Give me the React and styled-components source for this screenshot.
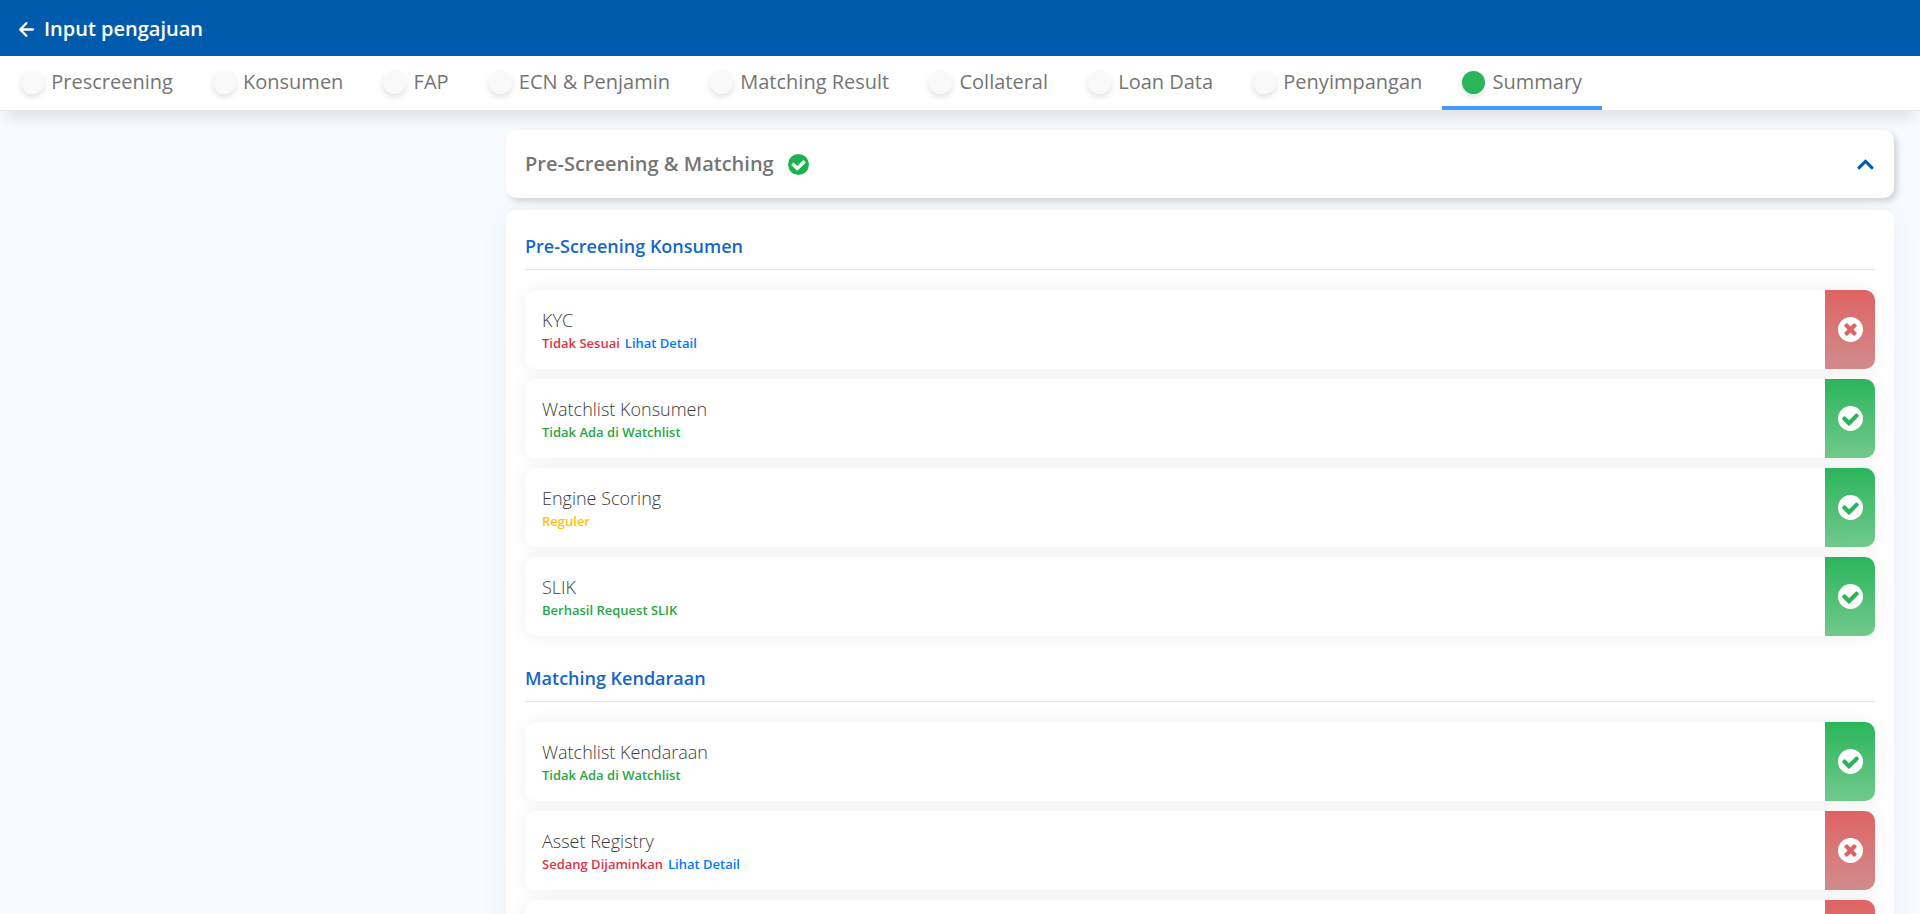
import React from "react";
import styled, { createGlobalStyle } from "styled-components";
import { FaChevronUp } from "react-icons/fa";

const Global = createGlobalStyle`
  * { box-sizing: border-box; }
  body {
    margin: 0;
    background: #f7fbff;
    font-family: "Open Sans", "Noto Sans", sans-serif;
    color: #757575;
  }
  h1, h2, h3, h4, p, ul { margin: 0; padding: 0; }
`;

const Page = styled.div`
  display: flex;
  flex-direction: column;
  height: 100vh;
  overflow: hidden;
`;

const TopBar = styled.header`
  display: flex;
  align-items: center;
  gap: 9px;
  flex: none;
  height: 56px;
  padding: 2px 18px 0;
  background: #005bac;
  color: #fff;
`;

const BackButton = styled.button`
  display: flex;
  padding: 0;
  border: 0;
  background: none;
  color: inherit;
  cursor: pointer;
`;

const PageTitle = styled.h1`
  font-size: 20px;
  line-height: 28px;
  font-weight: 600;
`;

const TabBar = styled.nav`
  display: flex;
  flex: none;
  height: 55px;
  padding-left: 1px;
  background: #fff;
  border-bottom: 1px solid #e6e6e6;
  box-shadow: 0 12px 16px -6px rgba(0, 0, 0, 0.11);
  z-index: 1;
`;

const Tab = styled.a`
  padding: 0 20px;
  border-bottom: 4px solid ${(p) => (p.$active ? "#4299ff" : "transparent")};
  color: #757575;
  font-size: 20px;
  line-height: 52px;
  text-decoration: none;
  white-space: nowrap;
`;

const Dot = styled.span`
  display: inline-block;
  width: 23px;
  height: 23px;
  margin: 0 2px 2px 0;
  border-radius: 50%;
  vertical-align: middle;
  background: ${(p) => (p.$active ? "#2bb55b" : "#f9f9f9")};
  box-shadow: 0 3px 6px rgba(0, 0, 0, 0.12);
`;

const Scroller = styled.div`
  flex: 1;
  min-height: 0;
  overflow-y: auto;
  scrollbar-width: none;
`;

const Columns = styled.div`
  display: grid;
  grid-template-columns: 1fr 3fr;
`;

const Main = styled.main`
  grid-column: 2;
  display: flex;
  flex-direction: column;
  gap: 12px;
  padding: 19px 26px;
`;

const AccordionButton = styled.button`
  display: flex;
  align-items: center;
  gap: 14px;
  height: 68px;
  padding: 0 19px;
  border: 0;
  border-radius: 10px;
  background: #fff;
  box-shadow: 3px 3px 6px rgba(0, 0, 0, 0.16);
  color: #757575;
  font: 600 20px/28px "Open Sans", "Noto Sans", sans-serif;
  text-align: left;
  cursor: pointer;
`;

const Chevron = styled(FaChevronUp)`
  margin-left: auto;
  color: #005bac;
`;

const Panel = styled.div`
  display: flex;
  flex-direction: column;
  gap: 28px;
  padding: 22px 19px;
  border-radius: 10px;
  background: #fff;
  box-shadow: 0 0 30px rgba(0, 60, 140, 0.06);
`;

const SectionTitle = styled.h3`
  padding-bottom: 9px;
  border-bottom: 1px solid #e2e2e2;
  margin-bottom: 20px;
  color: #1467c8;
  font-size: 18px;
  line-height: 28px;
  font-weight: 600;
`;

const Rows = styled.ul`
  display: flex;
  flex-direction: column;
  gap: 10px;
  list-style: none;
`;

const Row = styled.li`
  display: flex;
  height: 79px;
  border-radius: 10px;
  background: #fff;
  box-shadow: 0 0 20px rgba(0, 0, 0, 0.06);
  overflow: hidden;
`;

const RowText = styled.div`
  flex: 1;
  padding: 17px 17px 0;
`;

const RowTitle = styled.h4`
  color: #3c3c3c;
  font-size: 18px;
  line-height: 26px;
  font-weight: 300;
`;

const statusColors = { bad: "#dc3545", good: "#28a745", warn: "#ffc107" };

const RowStatus = styled.p`
  color: ${(p) => statusColors[p.$tone]};
  font-size: 13px;
  line-height: 20px;
  font-weight: 600;
`;

const DetailLink = styled.a`
  margin-left: 5px;
  color: #007bff;
  text-decoration: none;
`;

const Badge = styled.div`
  display: flex;
  align-items: center;
  justify-content: center;
  width: 50px;
  background: ${(p) =>
    p.$ok
      ? "linear-gradient(#2bb55b, #72c98d)"
      : "linear-gradient(#e06363, #d18c8c)"};
`;

const marks = {
  check:
    "M1412 734q0-28-18-46l-91-90q-19-19-45-19t-45 19l-408 407-226-226q-19-19-45-19t-45 19l-91 90q-18 18-18 46 0 27 18 45l362 362q19 19 45 19 27 0 46-19l543-543q18-18 18-45z",
  cross:
    "M1277 1122q0-26-19-45l-181-181 181-181q19-19 19-45 0-27-19-46l-90-90q-19-19-46-19-26 0-45 19l-181 181-181-181q-19-19-45-19-27 0-46 19l-90 90q-19 19-19 46 0 26 19 45l181 181-181 181q-19 19-19 45 0 27 19 46l90 90q19 19 46 19 26 0 45-19l181-181 181 181q19 19 45 19 27 0 46-19l90-90q19-19 19-46z",
};

function RoundIcon({ mark, size, disc, color }) {
  return (
    <svg width={size} height={size} viewBox="128 128 1536 1536" aria-hidden="true">
      <circle cx="896" cy="896" r="768" fill={disc} />
      <path d={marks[mark]} fill={color} />
    </svg>
  );
}

const tabs = [
  "Prescreening",
  "Konsumen",
  "FAP",
  "ECN & Penjamin",
  "Matching Result",
  "Collateral",
  "Loan Data",
  "Penyimpangan",
  "Summary",
];

const sections = [
  {
    title: "Pre-Screening Konsumen",
    rows: [
      { title: "KYC", status: "Tidak Sesuai", tone: "bad", detail: true },
      { title: "Watchlist Konsumen", status: "Tidak Ada di Watchlist", tone: "good", ok: true },
      { title: "Engine Scoring", status: "Reguler", tone: "warn", ok: true },
      { title: "SLIK", status: "Berhasil Request SLIK", tone: "good", ok: true },
    ],
  },
  {
    title: "Matching Kendaraan",
    rows: [
      { title: "Watchlist Kendaraan", status: "Tidak Ada di Watchlist", tone: "good", ok: true },
      { title: "Asset Registry", status: "Sedang Dijaminkan", tone: "bad", detail: true },
      {},
    ],
  },
];

function CheckRow({ title, status, tone, ok, detail }) {
  return (
    <Row>
      <RowText>
        {title && <RowTitle>{title}</RowTitle>}
        {status && (
          <RowStatus $tone={tone}>
            {status}
            {detail && <DetailLink href="#detail">Lihat Detail</DetailLink>}
          </RowStatus>
        )}
      </RowText>
      <Badge $ok={ok}>
        <RoundIcon
          mark={ok ? "check" : "cross"}
          size={25}
          disc="#fff"
          color={ok ? "#2bb55b" : "#e06363"}
        />
      </Badge>
    </Row>
  );
}

export default function App() {
  return (
    <Page>
      <Global />
      <TopBar>
        <BackButton aria-label="Kembali">
          <svg
            width="17"
            height="17"
            viewBox="0 0 17 17"
            fill="none"
            stroke="currentColor"
            strokeWidth="2.3"
            strokeLinecap="round"
            strokeLinejoin="round"
          >
            <path d="M15 8.5H2.5M8.3 2.2 2.2 8.5l6.1 6.3" />
          </svg>
        </BackButton>
        <PageTitle>Input pengajuan</PageTitle>
      </TopBar>
      <TabBar>
        {tabs.map((name) => {
          const active = name === "Summary";
          return (
            <Tab key={name} href="#" $active={active} aria-current={active ? "page" : undefined}>
              <Dot $active={active} /> {name}
            </Tab>
          );
        })}
      </TabBar>
      <Scroller>
        <Columns>
          <Main>
            <AccordionButton aria-expanded="true">
              Pre-Screening &amp; Matching
              <RoundIcon mark="check" size={21} disc="#1eb14f" color="#fff" />
              <Chevron size={19} />
            </AccordionButton>
            <Panel>
              {sections.map((section) => (
                <section key={section.title}>
                  <SectionTitle>{section.title}</SectionTitle>
                  <Rows>
                    {section.rows.map((row, i) => (
                      <CheckRow key={i} {...row} />
                    ))}
                  </Rows>
                </section>
              ))}
            </Panel>
          </Main>
        </Columns>
      </Scroller>
    </Page>
  );
}
